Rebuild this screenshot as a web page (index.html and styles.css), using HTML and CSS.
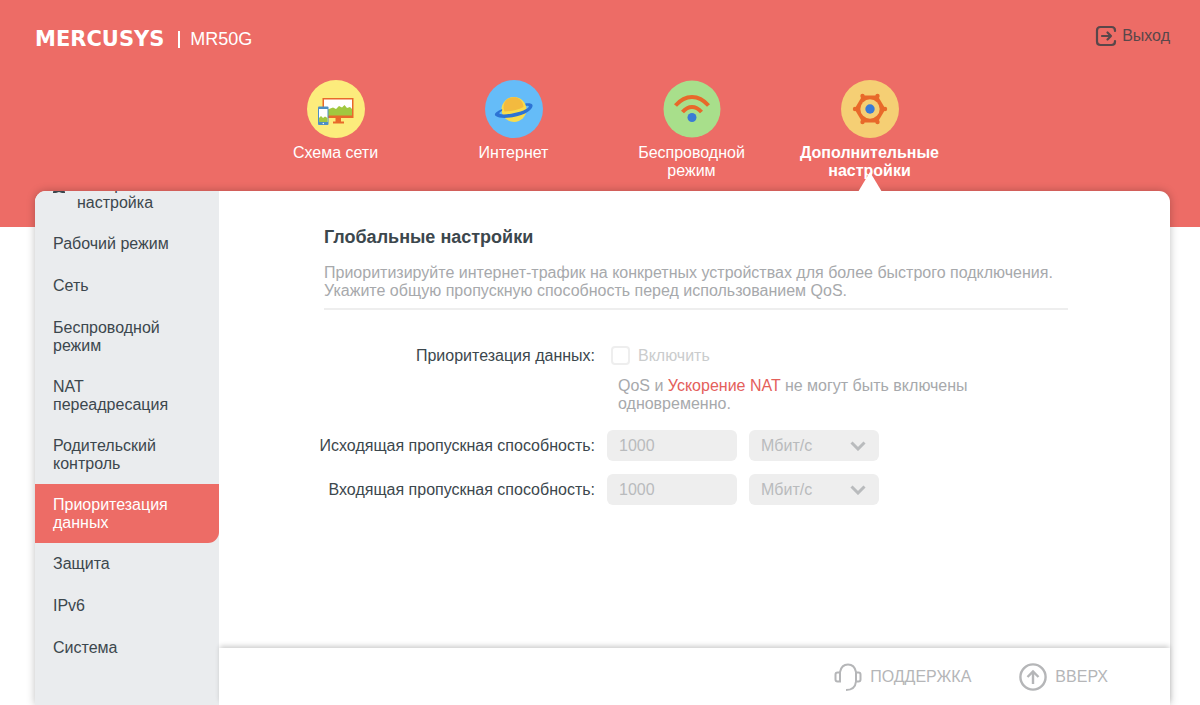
FILE: index.html
```html
<!DOCTYPE html>
<html lang="ru">
<head>
<meta charset="utf-8">
<meta name="viewport" content="width=device-width, initial-scale=1">
<title>MR50G</title>
<link rel="stylesheet" href="styles.css">
</head>
<body>
<header class="header">
  <div class="topbar">
    <div class="brand"><span class="logo">MERCUSYS</span><span class="divider"></span><span class="model">MR50G</span></div>
    <button class="logout" type="button">
      <svg width="22" height="22" viewBox="0 0 22 22" fill="none" stroke="currentColor" stroke-width="2.200" stroke-linecap="round" stroke-linejoin="round"><path d="M20 6V5.500Q20 2 16.500 2H5.500Q2 2 2 5.500V16.500Q2 20 5.500 20H16.500Q20 20 20 16.500V16M7 11H16M12.500 7.500L16 11L12.500 14.500"/></svg>
      Выход
    </button>
  </div>
  <nav class="tabs">
    <a class="tab" href="#">
      <svg width="58" height="58" viewBox="0 0 58 58"><circle cx="29" cy="29" r="29" fill="#fcec7c"/><path d="M15.500 18H46.500V38H15.500Z" fill="#e8692a"/><path d="M17 19.500H45V34.500H17Z" fill="#fff"/><path d="M17 35.500V31L22 29L26 27.500L29 29L32 26L35 27.500L37.500 25L40 28L43 27L45 29V35.500Z" fill="#a1c83f"/><path d="M28.500 38H34V41.500H37V43.500H26V41.500H28.500Z" fill="#e8692a"/><rect x="11" y="26.500" width="10.500" height="18.500" rx="1" fill="#4d8fc4"/><path d="M12 29H20.500V42H12Z" fill="#fff"/><path d="M12 42V38L14 36L16 38L18 36.500L20.500 38V42Z" fill="#a1c83f"/><circle cx="16.300" cy="43.500" r=".7" fill="#fff"/></svg>
      Схема сети
    </a>
    <a class="tab" href="#">
      <svg width="58" height="58" viewBox="0 0 58 58"><circle cx="29" cy="29" r="29" fill="#65bcf8"/><circle cx="29" cy="29.500" r="12.500" fill="#f8dc4c"/><path d="M19.500 31.500A10 10 0 1 1 38.500 27Q31 31 19.500 31.500Z" fill="#f3ba3f"/><path d="M17.200 29C10.500 31.500 8.500 34.500 10.700 36C15 39.500 31 38 40 33.500C47 30 49.500 25 46 23.800C44.500 23.200 42.200 23.200 40.200 23.600L41 26C43 25.600 44.500 26 43.500 27.200C41 31 22 35.800 15 34C13.300 33.500 15 32 17 31Z" fill="#2c73d4"/></svg>
      Интернет
    </a>
    <a class="tab" href="#">
      <svg width="58" height="58" viewBox="0 0 58 58"><circle cx="29" cy="29" r="28.500" fill="#a8df8b"/><g fill="none" stroke="#e8692a" stroke-width="4"><path d="M12.500 25.500Q20 17 29 17T45.500 25.500"/><path d="M19.500 32Q24 27 29 27T38.500 32"/></g><circle cx="29" cy="37.500" r="4.500" fill="#3a7bd5"/></svg>
      Беспроводной режим
    </a>
    <a class="tab tab-active" href="#">
      <svg width="58" height="58" viewBox="0 0 58 58"><circle cx="29" cy="29" r="29" fill="#f5cf74"/><g fill="#e8692a"><path d="M21.500 15.500H36.500L44.500 29L36.500 42.500H21.500L13.500 29Z"/><circle cx="21.500" cy="16" r="2.200"/><circle cx="36.500" cy="16" r="2.200"/><circle cx="44" cy="29" r="2.200"/><circle cx="36.500" cy="42" r="2.200"/><circle cx="21.500" cy="42" r="2.200"/><circle cx="14" cy="29" r="2.200"/></g><circle cx="29" cy="29" r="9.700" fill="#f5cf74"/><circle cx="29" cy="29" r="4.700" fill="#3a7bd5"/></svg>
      Дополнительные настройки
    </a>
  </nav>
</header>
<main class="panel">
  <aside class="sidebar">
    <ul class="menu">
      <li><a class="item item-icon" href="#"><svg class="wizard" width="12" height="18" viewBox="0 0 12 18" fill="currentColor"><path d="M5 2H7V11H5ZM2 11H10L12 16V17H9L6 16L3 17H0V16Z"/></svg><span>Быстрая настройка</span></a></li>
      <li><a class="item" href="#">Рабочий режим</a></li>
      <li><a class="item" href="#">Сеть</a></li>
      <li><a class="item" href="#">Беспроводной режим</a></li>
      <li><a class="item" href="#">NAT переадресация</a></li>
      <li><a class="item" href="#">Родительский контроль</a></li>
      <li><a class="item item-active" href="#">Приоритезация данных</a></li>
      <li><a class="item" href="#">Защита</a></li>
      <li><a class="item" href="#">IPv6</a></li>
      <li><a class="item" href="#">Система</a></li>
    </ul>
  </aside>
  <div class="main">
    <section class="content">
      <h1 class="title">Глобальные настройки</h1>
      <p class="intro">Приоритизируйте интернет-трафик на конкретных устройствах для более быстрого подключения. Укажите общую пропускную способность перед использованием QoS.</p>
      <form class="form">
        <div class="row">
          <span class="label">Приоритезация данных:</span>
          <label class="check"><input class="box" type="checkbox" disabled>Включить</label>
        </div>
        <p class="note">QoS и <a class="link" href="#">Ускорение NAT</a> не могут быть включены одновременно.</p>
        <div class="row">
          <label class="label" for="up">Исходящая пропускная способность:</label>
          <div class="fields">
            <input class="field" id="up" type="text" value="1000" disabled>
            <div class="select"><select class="field" aria-label="Единица исходящей скорости" disabled><option>Мбит/с</option></select><svg class="chevron" width="16" height="10" viewBox="0 0 16 10" fill="none" stroke="currentColor" stroke-width="3"><path d="M1.500 1.500L8 8L14.500 1.500"/></svg></div>
          </div>
        </div>
        <div class="row">
          <label class="label" for="down">Входящая пропускная способность:</label>
          <div class="fields">
            <input class="field" id="down" type="text" value="1000" disabled>
            <div class="select"><select class="field" aria-label="Единица входящей скорости" disabled><option>Мбит/с</option></select><svg class="chevron" width="16" height="10" viewBox="0 0 16 10" fill="none" stroke="currentColor" stroke-width="3"><path d="M1.500 1.500L8 8L14.500 1.500"/></svg></div>
          </div>
        </div>
      </form>
    </section>
    <footer class="footer">
      <a class="foot-link" href="#"><svg width="28" height="28" viewBox="0 0 28 28" fill="none" stroke="currentColor" stroke-width="2"><path d="M6 9.500V18.500H3.500Q1.500 18.500 1.500 16.500V11.500Q1.500 9.500 3.500 9.500H6V9C7 4 10.500 1.500 14 1.500S21 4 22 9V9.500H24.500Q26.500 9.500 26.500 11.500V16.500Q26.500 18.500 24.500 18.500H22V9.500M22 18.500C21.500 23.500 18 27 12 27"/></svg>ПОДДЕРЖКА</a>
      <a class="foot-link" href="#"><svg width="28" height="28" viewBox="0 0 28 28" fill="none" stroke="currentColor" stroke-width="2.400"><circle cx="14" cy="14" r="12.600"/><path d="M14 21V8.500M8.500 14L14 8.500L19.500 14"/></svg>ВВЕРХ</a>
    </footer>
  </div>
</main>
</body>
</html>
```

FILE: styles.css
```css
* {
  box-sizing: border-box;
}

body {
  margin: 0;
  min-height: 100vh;
  display: flex;
  flex-direction: column;
  background: #fff;
  color: #3c474d;
  font: 16px/18px "Liberation Sans", Arial, sans-serif;
}

a {
  color: inherit;
  text-decoration: none;
}

.header {
  padding: 25px 30px 47px 35px;
  background: #ed6c66;
}

.topbar {
  display: flex;
  justify-content: space-between;
  align-items: flex-start;
  height: 55px;
  color: #fff;
}

.brand {
  display: flex;
  align-items: center;
  height: 28px;
}

.logo {
  font: bold 21px/24px "DejaVu Sans", sans-serif;
}

.divider {
  width: 2px;
  height: 17px;
  margin: 0 10px 0 14px;
  background: #fff;
}

.model {
  font-size: 18px;
}

.logout {
  display: flex;
  align-items: center;
  gap: 5px;
  padding: 0;
  border: 0;
  background: none;
  color: #59474a;
  font: inherit;
}

.tabs {
  display: flex;
  justify-content: center;
}

.tab {
  width: 178px;
  min-height: 100px;
  padding: 0 18px;
  display: flex;
  flex-direction: column;
  align-items: center;
  gap: 6px;
  color: #fff;
  text-align: center;
}

.tab-active {
  position: relative;
  font-weight: bold;
}

.tab-active::after {
  content: "";
  position: absolute;
  bottom: -12px;
  left: 50%;
  margin-left: -12px;
  border: solid transparent;
  border-width: 0 12px 20px;
  border-bottom-color: #fff;
  z-index: 2;
}

.panel {
  flex: 1;
  display: flex;
  margin: -36px 30px 0 35px;
  border-radius: 11px 11px 0 0;
  background: #fff;
  box-shadow: 0 0 9px rgba(0, 0, 0, 0.25);
}

.sidebar {
  width: 184px;
  flex: none;
  overflow: hidden;
  border-radius: 11px 0 0 0;
  background: #eaecee;
}

.menu {
  margin: -27px 0 0;
  padding: 0;
  list-style: none;
}

.item {
  display: block;
  min-height: 42px;
  padding: 12px 44px 11px 18px;
}

.item-icon {
  display: flex;
  gap: 12px;
  padding-right: 24px;
}

.wizard {
  flex: none;
}

.item-active {
  border-radius: 0 0 11px 0;
  background: #ed6c66;
  color: #fff;
}

.main {
  flex: 1;
  display: flex;
  flex-direction: column;
}

.content {
  flex: 1;
  padding: 36px 102px 24px 105px;
}

.title {
  margin: 0 0 17px;
  font-size: 18px;
  line-height: 20px;
}

.intro {
  margin: 0 0 36px;
  padding-bottom: 8px;
  border-bottom: 2px solid #eee;
  color: #a7a9ac;
}

.form {
  margin-left: -9px;
}

.row {
  display: flex;
  align-items: center;
  gap: 12px;
  margin-bottom: 13px;
}

.label {
  width: 280px;
  white-space: nowrap;
  text-align: right;
}

.check {
  display: flex;
  align-items: center;
  gap: 8px;
  margin-left: 4px;
  color: #cacccd;
}

.box {
  width: 19px;
  height: 19px;
  margin: 0;
  appearance: none;
  border: 2px solid #eee;
  border-radius: 4px;
  background: #fff;
}

.note {
  max-width: 669px;
  margin: -1px 0 17px;
  padding-left: 303px;
  color: #a7a9ac;
}

.link {
  color: #e4605b;
}

.fields {
  display: flex;
  gap: 12px;
}

.field {
  display: block;
  width: 130px;
  height: 31px;
  padding: 0 12px;
  appearance: none;
  border: 0;
  border-radius: 6px;
  background: #eee;
  color: #b9bbbd;
  font: inherit;
  opacity: 1;
}

.select {
  position: relative;
  color: #b9bbbd;
}

.chevron {
  position: absolute;
  top: 11px;
  right: 13px;
  pointer-events: none;
}

.footer {
  display: flex;
  justify-content: flex-end;
  align-items: center;
  gap: 48px;
  height: 57px;
  padding: 0 62px 0 24px;
  background: #fff;
  color: #b5b6b8;
  box-shadow: 0 -3px 5px -1px rgba(0, 0, 0, 0.2);
}

.foot-link {
  display: flex;
  align-items: center;
  gap: 8px;
}
```
